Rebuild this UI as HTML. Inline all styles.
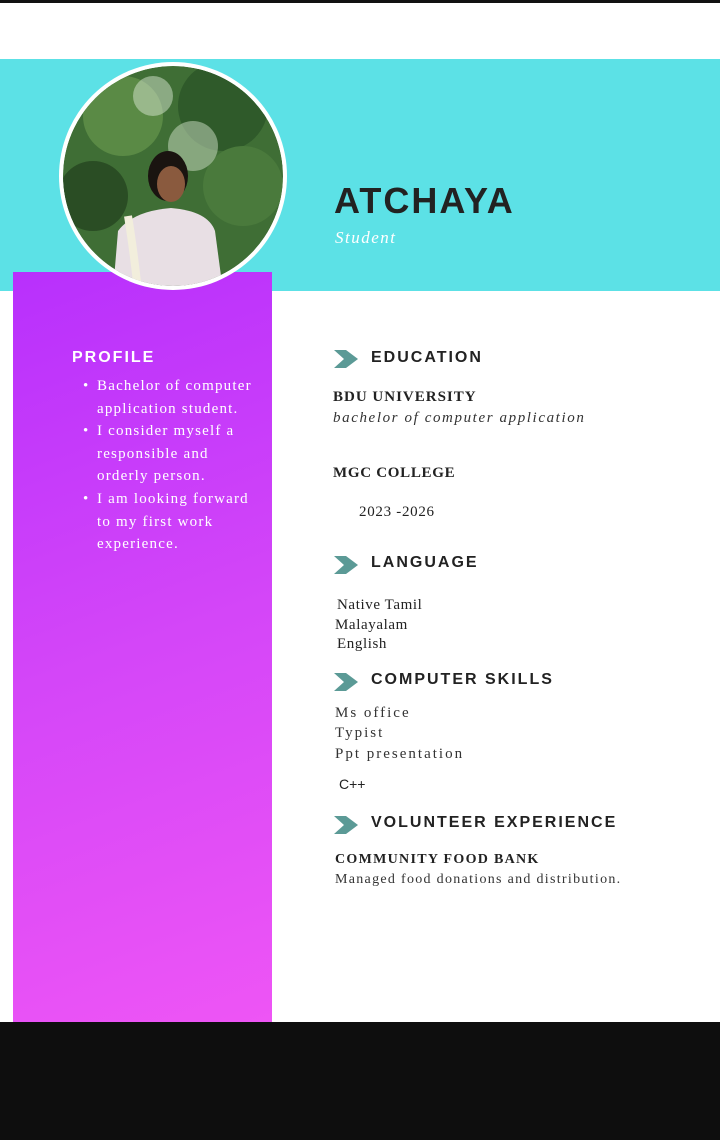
<!DOCTYPE html>
<html><head><meta charset="utf-8"><style>
*{margin:0;padding:0;box-sizing:border-box}
body{width:720px;height:1140px;position:relative;background:#fff;overflow:hidden;font-family:"Liberation Serif",serif;color:#222}
.a{position:absolute}
.h{font-family:"Liberation Sans",sans-serif;font-weight:bold;letter-spacing:2px;font-size:16px;color:#222}
.chev{position:absolute;width:24px;height:18px}
.s{font-size:15px;letter-spacing:2px;color:#333}
.b{font-weight:bold;font-size:15px;letter-spacing:1px;color:#222}
.p{font-size:15px;letter-spacing:.6px}
</style></head><body>
<div class="a" style="left:0;top:0;width:720px;height:3px;background:#111"></div>
<div class="a" style="left:0;top:59px;width:720px;height:232px;background:#5ce1e6"></div>
<div class="a" style="left:13px;top:272px;width:259px;height:750px;background:linear-gradient(160deg,#b830fc 0%,#d446f8 50%,#ee55f5 100%)"></div>
<div class="a" style="left:59px;top:62px;width:228px;height:228px;border-radius:50%;background:#fff;padding:4px">
<svg width="220" height="220" viewBox="0 0 220 220" style="display:block;border-radius:50%">
<defs><clipPath id="c"><circle cx="110" cy="110" r="110"/></clipPath></defs>
<g clip-path="url(#c)">
<rect width="220" height="220" fill="#3f6e35"/>
<circle cx="60" cy="50" r="40" fill="#5a8a45"/><circle cx="160" cy="40" r="45" fill="#2f5a2a"/>
<circle cx="180" cy="120" r="40" fill="#4a7a3c"/><circle cx="30" cy="130" r="35" fill="#2a4d24"/>
<circle cx="130" cy="80" r="25" fill="#cfe0c8" opacity=".5"/><circle cx="90" cy="30" r="20" fill="#d8e6d2" opacity=".5"/>
<rect x="185" y="190" width="40" height="30" fill="#c8cbc6"/>
<ellipse cx="105" cy="110" rx="20" ry="25" fill="#1a1410"/>
<ellipse cx="108" cy="118" rx="14" ry="18" fill="#8a5a3e"/>
<path d="M50 225 L55 165 Q70 145 108 142 Q145 145 152 165 L160 225 Z" fill="#e8dfe4"/>
<path d="M65 150 Q70 180 75 225" stroke="#f2eedc" stroke-width="8" fill="none"/>
</g></svg></div>
<div class="a" style="left:334px;top:180px;font-family:'Liberation Sans',sans-serif;font-weight:bold;font-size:36px;letter-spacing:2px;color:#222">ATCHAYA</div>
<div class="a" style="left:335px;top:228px;font-style:italic;font-size:17px;letter-spacing:1.5px;color:#fff">Student</div>

<div class="a h" style="left:72px;top:349px;color:#fff">PROFILE</div>
<ul class="a" style="left:97px;top:375px;width:168px;color:#fff;font-size:15px;line-height:22.6px;letter-spacing:1.2px;list-style:none">
<li style="position:relative"><span style="position:absolute;left:-14px">•</span>Bachelor of computer application student.</li>
<li style="position:relative"><span style="position:absolute;left:-14px">•</span>I consider myself a responsible and orderly person.</li>
<li style="position:relative"><span style="position:absolute;left:-14px">•</span>I am looking forward to my first work experience.</li>
</ul>

<svg class="chev" style="left:334px;top:350px" viewBox="0 0 24 18"><path d="M0 0H12L24 9L12 18H0L10 9Z" fill="#5b9a96"/></svg>
<div class="a h" style="left:371px;top:349px">EDUCATION</div>
<div class="a b" style="left:333px;top:389px">BDU UNIVERSITY</div>
<div class="a" style="left:333px;top:410px;font-style:italic;font-size:15px;letter-spacing:1.6px;color:#333">bachelor of computer application</div>
<div class="a b" style="left:333px;top:465px;letter-spacing:.7px">MGC COLLEGE</div>
<div class="a" style="left:359px;top:504px;font-size:15px;letter-spacing:.7px">2023 -2026</div>

<svg class="chev" style="left:334px;top:556px" viewBox="0 0 24 18"><path d="M0 0H12L24 9L12 18H0L10 9Z" fill="#5b9a96"/></svg>
<div class="a h" style="left:371px;top:554px">LANGUAGE</div>
<div class="a p" style="left:337px;top:597px">Native Tamil</div>
<div class="a p" style="left:335px;top:617px">Malayalam</div>
<div class="a p" style="left:337px;top:636px">English</div>

<svg class="chev" style="left:334px;top:673px" viewBox="0 0 24 18"><path d="M0 0H12L24 9L12 18H0L10 9Z" fill="#5b9a96"/></svg>
<div class="a h" style="left:371px;top:671px">COMPUTER SKILLS</div>
<div class="a s" style="left:335px;top:705px">Ms office</div>
<div class="a s" style="left:335px;top:725px">Typist</div>
<div class="a s" style="left:335px;top:746px">Ppt presentation</div>
<div class="a" style="left:339px;top:776px;font-size:14px;font-family:'Liberation Sans',sans-serif">C++</div>

<svg class="chev" style="left:334px;top:816px" viewBox="0 0 24 18"><path d="M0 0H12L24 9L12 18H0L10 9Z" fill="#5b9a96"/></svg>
<div class="a h" style="left:371px;top:814px">VOLUNTEER EXPERIENCE</div>
<div class="a b" style="left:335px;top:852px;font-size:14px;letter-spacing:1.3px">COMMUNITY FOOD BANK</div>
<div class="a" style="left:335px;top:872px;font-size:14px;letter-spacing:1.3px;color:#333">Managed food donations and distribution.</div>

<div class="a" style="left:0;top:1022px;width:720px;height:118px;background:#0e0e0e"></div>
</body></html>
